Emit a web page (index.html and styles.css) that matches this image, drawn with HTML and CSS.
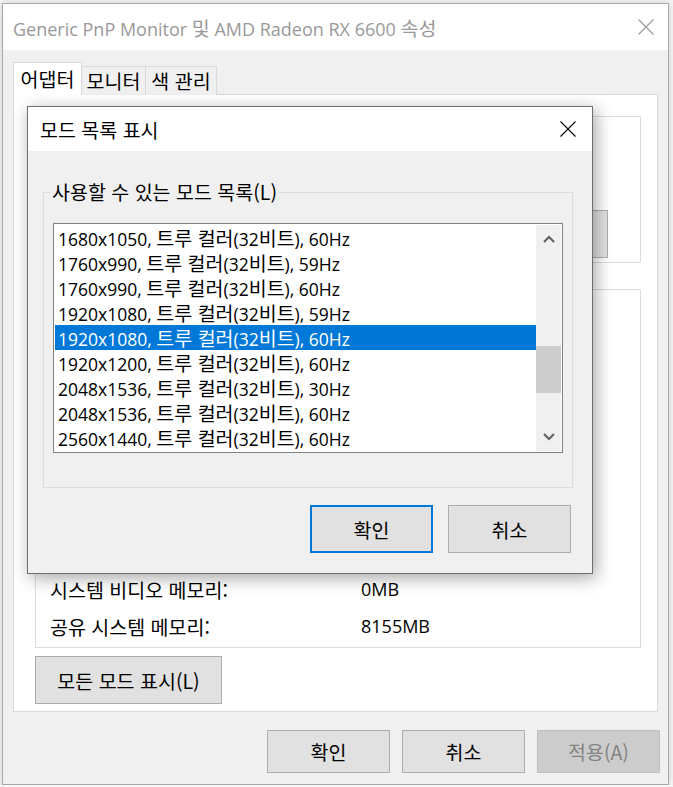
FILE: index.html
```html
<!DOCTYPE html>
<html lang="ko">
<head>
	<meta charset="utf-8">
	<title>Generic PnP Monitor 및 AMD Radeon RX 6600 속성</title>
	<link rel="stylesheet" href="styles.css">
</head>
<body>
	<div class="window">
		<div class="titlebar">
			<span class="title">Generic PnP Monitor <span class="ko">및</span> AMD Radeon RX 6600 <span class="ko">속성</span></span>
			<svg class="close" width="16" height="16" viewBox="0 0 16 16"><path d="M0.5 0.5 L15.5 15.5 M15.5 0.5 L0.5 15.5" stroke="#999" stroke-width="1.1" fill="none"/></svg>
		</div>

		<div class="winbody">
			<div class="tabs">
				<div class="tab active tab-w1">어댑터</div>
				<div class="tab tab-w2">모니터</div>
				<div class="tab tab-w3">색 관리</div>
			</div>

			<div class="panel">
				<div class="group group-top">
					<button class="btn btn-side">속성(P)</button>
				</div>
				<div class="group group-info">
					<div class="info-row"><span class="info-label">시스템 비디오 메모리:</span><span>0MB</span></div>
					<div class="info-row"><span class="info-label">공유 시스템 메모리:</span><span>8155MB</span></div>
				</div>
				<button class="btn btn-modes">모든 모드 표시(L)</button>
			</div>

			<div class="actions">
				<button class="btn btn-act">확인</button>
				<button class="btn btn-act">취소</button>
				<button class="btn btn-act disabled">적용(A)</button>
			</div>
		</div>

		<!-- modal dialog on top of the property sheet -->
		<div class="dialog">
			<div class="dlg-titlebar">
				<span class="dlg-title">모드 목록 표시</span>
				<svg class="close" width="16" height="16" viewBox="0 0 16 16"><path d="M0.5 0.5 L15.5 15.5 M15.5 0.5 L0.5 15.5" stroke="#000" stroke-width="1.1" fill="none"/></svg>
			</div>
			<div class="dlg-body">
				<fieldset class="modes">
					<legend>사용할 수 있는 모드 목록(L)</legend>
					<div class="listbox">
						<div class="items">
							<div class="item">1680x1050, <span class="ko">트루 컬러</span>(32<span class="ko">비트</span>), 60Hz</div>
							<div class="item">1760x990, <span class="ko">트루 컬러</span>(32<span class="ko">비트</span>), 59Hz</div>
							<div class="item">1760x990, <span class="ko">트루 컬러</span>(32<span class="ko">비트</span>), 60Hz</div>
							<div class="item">1920x1080, <span class="ko">트루 컬러</span>(32<span class="ko">비트</span>), 59Hz</div>
							<div class="item selected">1920x1080, <span class="ko">트루 컬러</span>(32<span class="ko">비트</span>), 60Hz</div>
							<div class="item">1920x1200, <span class="ko">트루 컬러</span>(32<span class="ko">비트</span>), 60Hz</div>
							<div class="item">2048x1536, <span class="ko">트루 컬러</span>(32<span class="ko">비트</span>), 30Hz</div>
							<div class="item">2048x1536, <span class="ko">트루 컬러</span>(32<span class="ko">비트</span>), 60Hz</div>
							<div class="item">2560x1440, <span class="ko">트루 컬러</span>(32<span class="ko">비트</span>), 60Hz</div>
						</div>
						<div class="scrollbar">
							<div class="arrow"><svg width="12" height="8" viewBox="0 0 12 8"><path d="M1 7 L6 2 L11 7" stroke="#606060" stroke-width="2" fill="none"/></svg></div>
							<div class="track"><div class="thumb"></div></div>
							<div class="arrow"><svg width="12" height="8" viewBox="0 0 12 8"><path d="M1 1 L6 6 L11 1" stroke="#606060" stroke-width="2" fill="none"/></svg></div>
						</div>
					</div>
				</fieldset>
				<div class="dlg-actions">
					<button class="btn btn-dlg default">확인</button>
					<button class="btn btn-dlg">취소</button>
				</div>
			</div>
		</div>
	</div>
</body>
</html>
```

FILE: styles.css
```css
body {
	margin: 0;
	background: #f7f7f7;
	font: 18px "Open Sans", "Noto Sans CJK KR", sans-serif;
	color: #000;
}
/* hangul runs: the korean face needs a larger size to match */
.ko,
.tab,
.dlg-title,
.btn,
.modes legend,
.info-label {
	font-size: 19.5px;
	font-family: "Noto Sans CJK KR", sans-serif;
}
.window {
	position: relative;
	box-sizing: border-box;
	width: 667px;
	height: 782px;
	margin: 3px 0 0 2px;
	border: 1px solid #a9a9a9;
	background: #f0f0f0;
	box-shadow: 0 0 8px rgba(0, 0, 0, 0.18);
}
.titlebar {
	display: flex;
	align-items: center;
	justify-content: space-between;
	height: 46px;
	padding: 0 14px 0 10px;
	background: #fff;
}
.title {
	color: #999;
	line-height: 26px;
	padding-top: 2px;
}
.winbody {
	padding: 13px 10px 0 10px;
}
.tabs {
	display: flex;
	align-items: flex-end;
	height: 32px;
	margin-bottom: -1px;
	position: relative;
}
.tab {
	box-sizing: border-box;
	height: 29px;
	line-height: 27px;
	text-align: center;
	border: 1px solid #d9d9d9;
	border-bottom: none;
	background: #f0f0f0;
	margin-left: -1px;
}
.tab.active {
	height: 33px;
	line-height: 31px;
	background: #fff;
	margin-left: 0;
	position: relative;
	z-index: 1;
}
.tab-w1 { width: 69px; }
.tab-w2 { width: 65px; }
.tab-w3 { width: 72px; }
.panel {
	box-sizing: border-box;
	width: 645px;
	height: 618px;
	border: 1px solid #d9d9d9;
	background: #fff;
	padding: 21px 16px 0 21px;
}
.group {
	box-sizing: border-box;
	border: 1px solid #dcdcdc;
}
.group-top {
	height: 147px;
	display: flex;
	justify-content: flex-end;
	align-items: flex-end;
	padding: 0 32px 4px 0;
}
.group-info {
	height: 359px;
	margin-top: 26px;
	display: flex;
	flex-direction: column;
	justify-content: flex-end;
	padding: 0 0 2px 14px;
}
.info-row {
	display: flex;
	line-height: 37px;
}
.info-label {
	width: 311px;
}
.btn {
	box-sizing: border-box;
	color: #000;
	background: #e1e1e1;
	border: 1px solid #adadad;
	padding: 0;
}
.btn-side {
	width: 123px;
	height: 48px;
}
.btn-modes {
	width: 187px;
	height: 48px;
	margin-top: 8px;
}
.actions {
	display: flex;
	justify-content: flex-end;
	gap: 12px;
	margin: 18px -2px 0 0;
}
.btn-act {
	width: 123px;
	height: 43px;
}
.btn.disabled {
	background: #cccccc;
	border-color: #bfbfbf;
	color: #838383;
}

/* dialog */
.dialog {
	position: absolute;
	left: 24px;
	top: 102px;
	box-sizing: border-box;
	width: 566px;
	height: 468px;
	border: 1px solid #6e6e6e;
	background: #f0f0f0;
	box-shadow: 3px 4px 16px rgba(0, 0, 0, 0.35);
}
.dlg-titlebar {
	display: flex;
	align-items: center;
	justify-content: space-between;
	height: 44px;
	padding: 0 16px 0 12px;
	background: #fff;
}
.dlg-body {
	padding: 29px 19px 0 15px;
}
.modes {
	box-sizing: border-box;
	width: 530px;
	height: 308px;
	margin: 0;
	padding: 0 9px;
	border: 1px solid #dcdcdc;
}
.modes legend {
	margin-left: -3px;
	padding: 0 2px;
	line-height: 24px;
}
.listbox {
	box-sizing: border-box;
	display: flex;
	width: 510px;
	height: 230px;
	margin-top: 19px;
	border: 1px solid #828282;
	padding: 1px;
	background: #fff;
}
.items {
	flex: 1;
}
.item {
	height: 24px;
	line-height: 24px;
	padding: 1px 0 0 3px;
	font-size: 17.5px;
	white-space: nowrap;
}
.item .ko {
	display: inline-block;
	height: 24px;
	line-height: 24px;
	vertical-align: baseline;
}
.item.selected {
	background: #0078d7;
	color: #fff;
}
.scrollbar {
	width: 25px;
	display: flex;
	flex-direction: column;
	background: #f0f0f0;
}
.arrow {
	height: 28px;
	display: flex;
	align-items: center;
	justify-content: center;
}
.track {
	flex: 1;
	padding-top: 93px;
}
.thumb {
	height: 47px;
	background: #cdcdcd;
}
.dlg-actions {
	display: flex;
	justify-content: flex-end;
	gap: 15px;
	margin: 17px 2px 0 0;
}
.btn-dlg {
	width: 123px;
	height: 48px;
}
.btn-dlg.default {
	border: 2px solid #0078d7;
}
```
